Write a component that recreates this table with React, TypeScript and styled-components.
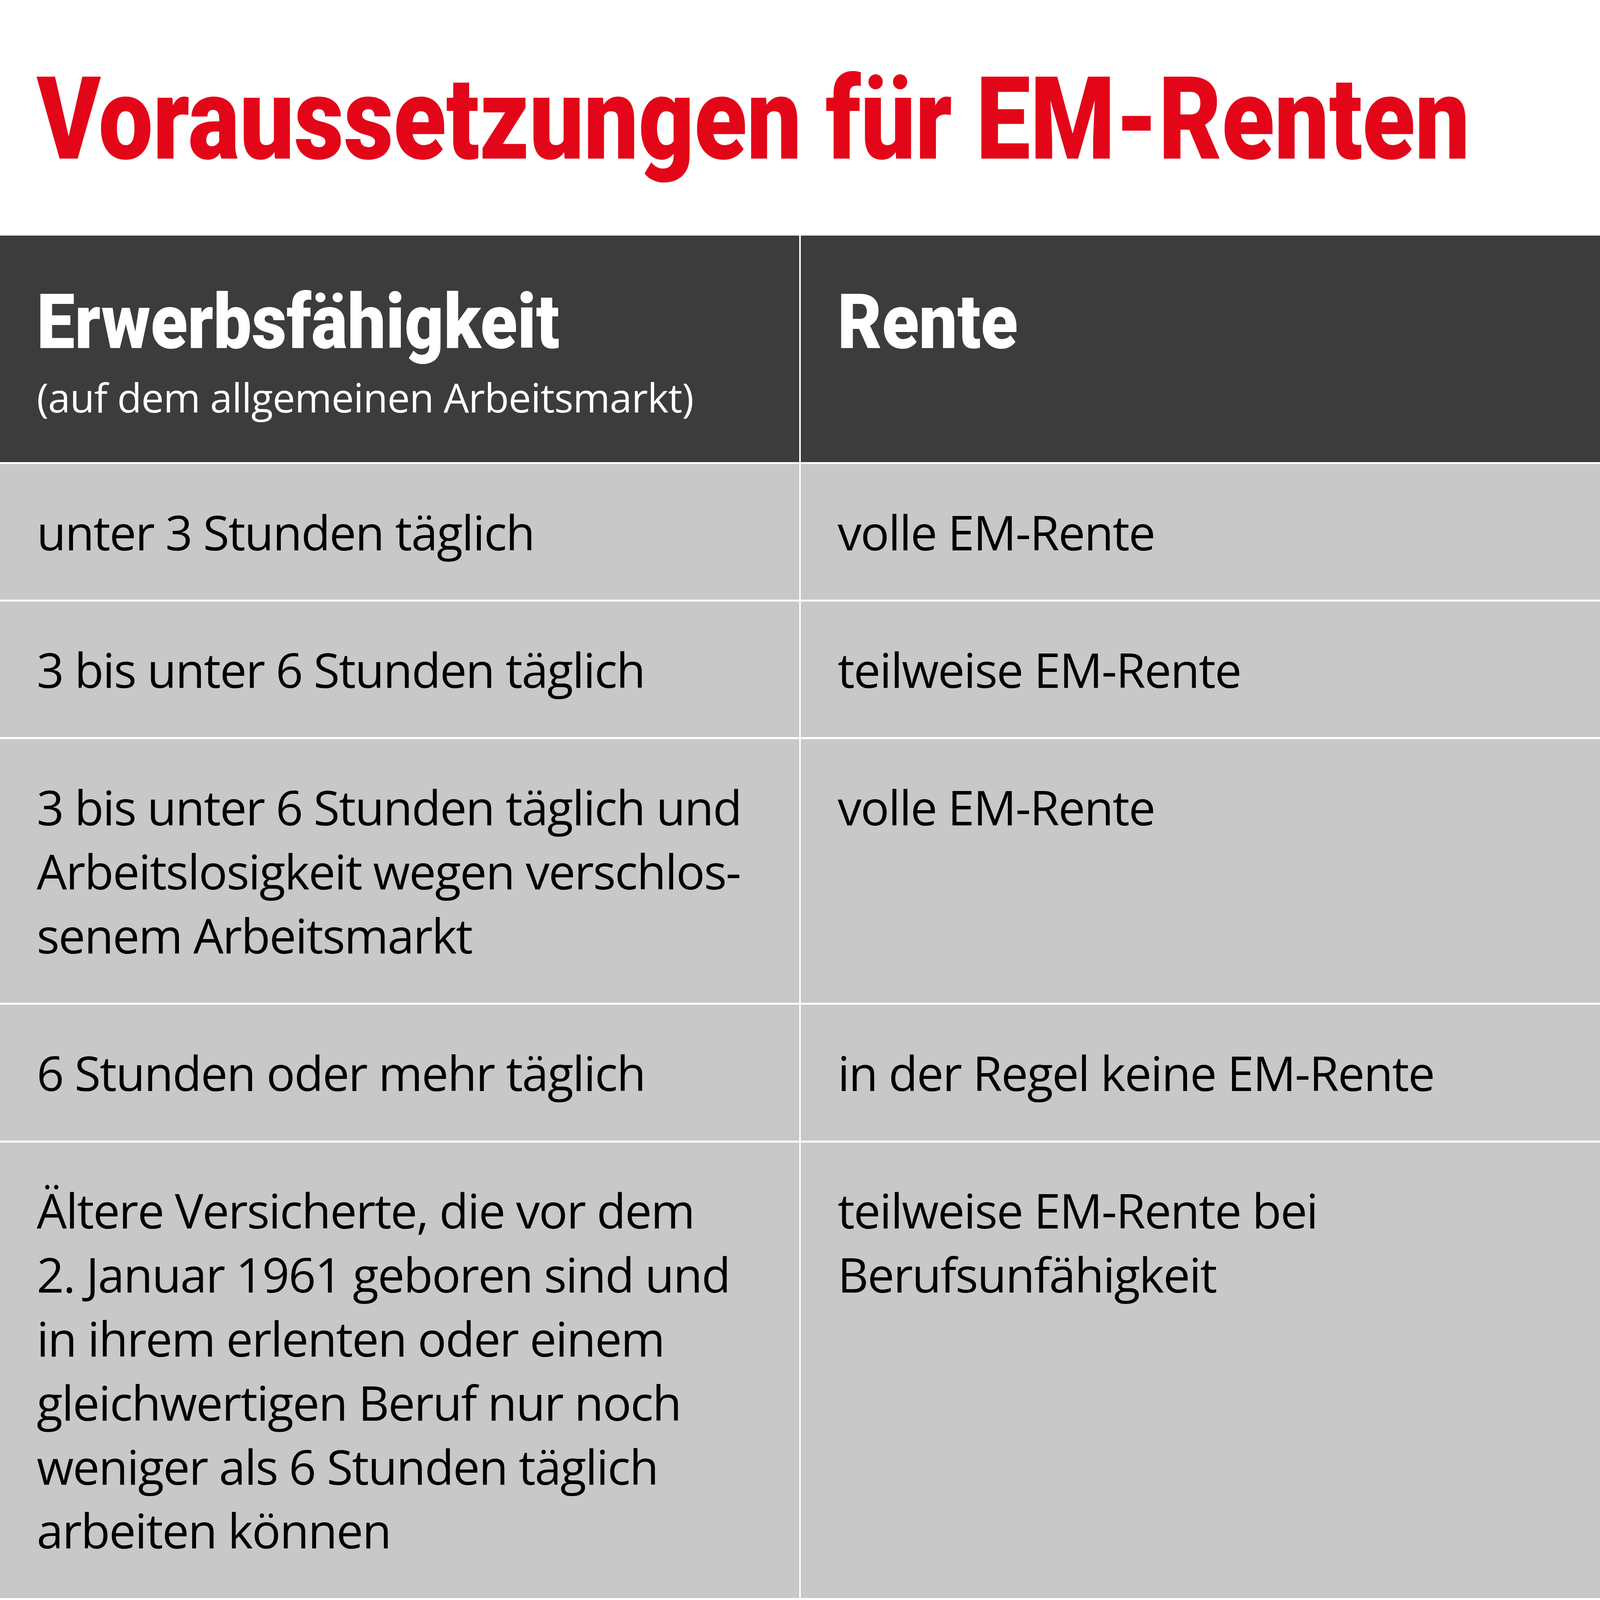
import React from 'react';
import styled, { createGlobalStyle } from 'styled-components';

// the artwork is 7500 units wide; one unit is a 7500th of the viewport width
const u = (n: number) => `calc(${n} * var(--u))`;

const GlobalStyle = createGlobalStyle`
  :root {
    --u: calc(100vw / 7500);
  }
  html, body {
    margin: 0;
    padding: 0;
    background: #ffffff;
    overflow: hidden;
  }
`;

const Page = styled.div`
  width: ${u(7500)};
  height: ${u(7500)};
  background: #ffffff;
  display: flex;
  flex-direction: column;
  overflow: hidden;
`;

const TitleBar = styled.header`
  flex-shrink: 0;
  height: ${u(1105)};
  box-sizing: border-box;
  padding: ${u(294)} 0 0 ${u(173)};
`;

const Title = styled.h1`
  margin: 0;
  display: inline-block;
  font-family: Roboto, 'Liberation Sans', sans-serif;
  font-weight: 900;
  font-size: ${u(540)};
  line-height: ${u(530)};
  color: #e30618;
  white-space: nowrap;
  transform: scaleX(0.84);
  transform-origin: left center;
`;

const Table = styled.div`
  flex: 1;
  display: grid;
  grid-template-columns: minmax(0, 1fr) minmax(0, 1fr);
  gap: ${u(9)};
  align-content: start;
`;

const HeadCell = styled.div`
  background: #3c3c3c;
  color: #ffffff;
  padding: ${u(223)} ${u(172)} ${u(184)};
`;

const HeadTitle = styled.div`
  display: block;
  width: max-content;
  font-family: Roboto, 'Liberation Sans', sans-serif;
  font-weight: 900;
  font-size: ${u(358)};
  line-height: ${u(366)};
  white-space: nowrap;
  transform: scaleX(0.891);
  transform-origin: left center;
`;

const HeadNote = styled.div`
  margin-top: ${u(48)};
  font-family: 'Open Sans', 'Noto Sans', sans-serif;
  font-size: ${u(188)};
  line-height: ${u(240)};
  letter-spacing: ${u(-2)};
  white-space: nowrap;
`;

const Cell = styled.div`
  background: #c8c8c8;
  color: #000000;
  padding: ${u(168)} ${u(172)};
  font-family: 'Open Sans', 'Noto Sans', sans-serif;
  font-size: ${u(224)};
  line-height: ${u(300)};
  letter-spacing: ${u(-4.5)};
  white-space: nowrap;
`;

type Row = {
  ability: string[];
  pension: string[];
};

const rows: Row[] = [
  { ability: ['unter 3 Stunden täglich'], pension: ['volle EM-Rente'] },
  { ability: ['3 bis unter 6 Stunden täglich'], pension: ['teilweise EM-Rente'] },
  {
    ability: [
      '3 bis unter 6 Stunden täglich und',
      'Arbeitslosigkeit wegen verschlos-',
      'senem Arbeitsmarkt',
    ],
    pension: ['volle EM-Rente'],
  },
  { ability: ['6 Stunden oder mehr täglich'], pension: ['in der Regel keine EM-Rente'] },
  {
    ability: [
      'Ältere Versicherte, die vor dem',
      '2. Januar 1961 geboren sind und',
      'in ihrem erlenten oder einem',
      'gleichwertigen Beruf nur noch',
      'weniger als 6 Stunden täglich',
      'arbeiten können',
    ],
    pension: ['teilweise EM-Rente bei', 'Berufsunfähigkeit'],
  },
];

const Lines = ({ lines }: { lines: string[] }) => (
  <>
    {lines.map((line, i) => (
      <React.Fragment key={i}>
        {i > 0 && <br />}
        {line}
      </React.Fragment>
    ))}
  </>
);

const App = () => {
  return (
    <Page>
      <GlobalStyle />
      <TitleBar>
        <Title>Voraussetzungen für EM-Renten</Title>
      </TitleBar>
      <Table>
        <HeadCell>
          <HeadTitle>Erwerbsfähigkeit</HeadTitle>
          <HeadNote>(auf dem allgemeinen Arbeitsmarkt)</HeadNote>
        </HeadCell>
        <HeadCell>
          <HeadTitle>Rente</HeadTitle>
        </HeadCell>
        {rows.map((row, i) => (
          <React.Fragment key={i}>
            <Cell>
              <Lines lines={row.ability} />
            </Cell>
            <Cell>
              <Lines lines={row.pension} />
            </Cell>
          </React.Fragment>
        ))}
      </Table>
    </Page>
  );
};

export default App;
